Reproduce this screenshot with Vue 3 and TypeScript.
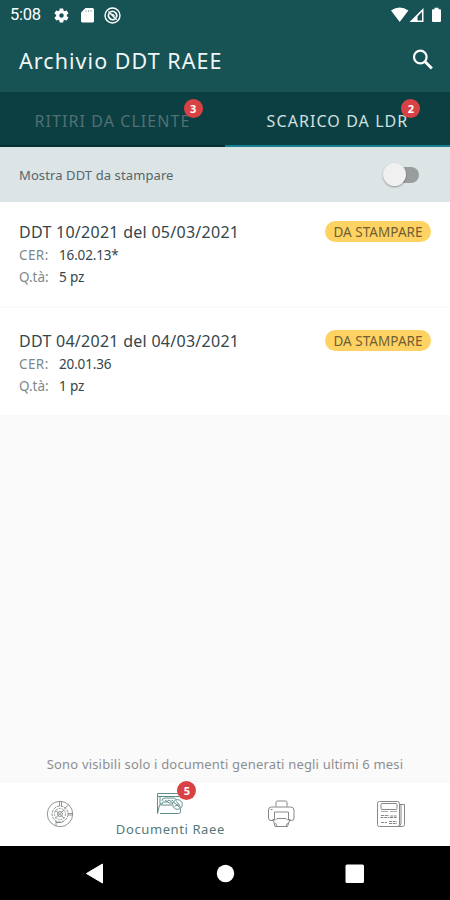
<script setup lang="ts">
import { ref } from 'vue'

interface Ddt {
  id: number
  title: string
  cer: string
  qty: string
}

const documents: Ddt[] = [
  { id: 1, title: 'DDT 10/2021 del 05/03/2021', cer: '16.02.13*', qty: '5 pz' },
  { id: 2, title: 'DDT 04/2021 del 04/03/2021', cer: '20.01.36', qty: '1 pz' },
]
const tabs = [
  { label: 'RITIRI DA CLIENTE', count: 3 },
  { label: 'SCARICO DA LDR', count: 2 },
]
const activeTab = ref(1)
const onlyToPrint = ref(false)
</script>

<template>
  <div class="screen">
    <div class="status">
      <span class="clock">5:08</span>
      <svg class="s-gear" width="17" height="17" viewBox="0 0 24 24"><path fill="#fff" fill-rule="evenodd" d="M19.4 13c0-.3.1-.6.1-1s0-.7-.1-1l2.1-1.600c.2-.2.2-.4.1-.6l-2-3.500c-.1-.2-.4-.3-.6-.2l-2.500 1c-.5-.4-1.100-.7-1.700-1l-.4-2.600c0-.3-.2-.5-.5-.5h-4c-.3 0-.5.2-.5.5L9 5.100c-.6.3-1.200.6-1.700 1l-2.500-1c-.2-.1-.5 0-.6.2l-2 3.500c-.1.2-.1.5.1.6L4.500 11c0 .3-.1.700-.1 1s0 .7.1 1l-2.200 1.600c-.2.2-.2.4-.1.600l2 3.500c.1.2.4.3.6.2l2.500-1c.5.4 1.100.7 1.700 1l.4 2.600c0 .3.3.5.500.5h4c.3 0 .5-.2.5-.5l.4-2.600c.6-.3 1.200-.6 1.700-1l2.500 1c.2.1.5 0 .6-.2l2-3.500c.1-.2.1-.5-.1-.6zM12 15.200a3.200 3.200 0 1 1 0-6.400 3.200 3.200 0 0 1 0 6.400z" /></svg>
      <svg class="s-sd" width="13" height="15" viewBox="0 0 13 15"><path fill="#fff" d="M4.500 0H11.500Q13 0 13 1.500V13Q13 14.500 11.500 14.500H1.500Q0 14.500 0 13V4.500z" /><path stroke="#9bb3b5" stroke-width="1" d="M5 2v2M7.500 2v2M10 2v2" /></svg>
      <svg class="s-dnd" width="17" height="17" viewBox="0 0 17 17" fill="none" stroke="#fff"><circle cx="8.500" cy="8.500" r="7.500" stroke-width="1.400" /><path stroke-width="1.600" d="M5 6.300A4.300 4.300 0 0 0 10.700 12.200M6.300 4.900A4.300 4.300 0 0 1 12.200 10.700M4.500 4.500l8.200 8.200" /><path stroke-width="1.500" d="M8 7l2.500 2" /></svg>
      <span class="grow"></span>
      <svg width="51" height="16" viewBox="0 0 51 16"><path fill="#fff" d="M0 3.500Q8.700-2.300 17.400 3.500L8.700 15z" /><path fill="#fff" fill-rule="evenodd" d="M32.500 1v14H18.500zM31 4.800L26.500 9.500V13.500H31z" /><path fill="#fff" d="M43.500 2.300V.8h4v1.500h1.500q1 0 1 1V14q0 1-1 1h-7q-1 0-1-1V3.300q0-1 1-1z" /></svg>
    </div>

    <header class="bar">
      <h1>Archivio DDT RAEE</h1>
      <svg width="22" height="22" viewBox="0 0 22 22" fill="none" stroke="#fff"><circle cx="8.300" cy="8" r="6.300" stroke-width="2.200" /><path stroke-width="2.800" d="M12.900 12.600l7 7" /></svg>
    </header>

    <nav class="tabs">
      <button v-for="(tab, i) in tabs" :key="tab.label" class="tab" :class="{ active: activeTab === i }" @click="activeTab = i">
        <span class="tab-label">{{ tab.label }}<b class="badge">{{ tab.count }}</b></span>
      </button>
    </nav>

    <div class="filter">
      <span class="filter-label">Mostra DDT da stampare</span>
      <button class="switch" :class="{ on: onlyToPrint }" role="switch" :aria-checked="onlyToPrint" @click="onlyToPrint = !onlyToPrint"><i></i></button>
    </div>

    <main class="list">
      <article v-for="doc in documents" :key="doc.id" class="item">
        <div class="info">
          <h2>{{ doc.title }}</h2>
          <p><span class="key cer">CER:</span><span class="val">{{ doc.cer }}</span></p>
          <p><span class="key">Q.tà:</span><span class="val">{{ doc.qty }}</span></p>
        </div>
        <span class="chip">DA STAMPARE</span>
      </article>
    </main>

    <p class="note">Sono visibili solo i documenti generati negli ultimi 6 mesi</p>

    <nav class="bottom">
      <a class="dest">
        <svg width="28" height="28" viewBox="0 0 28 28" fill="none" stroke="#85898a" stroke-width=".9"><circle cx="14" cy="14" r="12.700" /><circle cx="14" cy="14" r="8" stroke-dasharray="3 .8" /><circle cx="14" cy="14" r="5.500" stroke-dasharray="2 1" /><circle cx="14" cy="14" r="2.500" /><path d="M13.500 1.300V6M15.500 1.300V6M18.500 8.500l4-3.500M22 13.500h4.700M22 15h4.700M10 21v5M10 22.500h5.500l2-1.500M9 10l9.500 8.500M18.500 9.500L9 18.500" /></svg>
      </a>
      <a class="dest current">
        <span class="icon-wrap">
          <svg width="28" height="23" viewBox="0 0 28 23" fill="none" stroke="#4d8280" stroke-width=".9"><path d="M1.500 21.500V1.500H25v3M1.500 4.500H23M4 4.500v7.500M1.500 21.500l2-8.500H16M4 21.500h18.500q2 0 2-2V17M6 9q0-3 2.500-3h10l2 2M4 12h2l1-2h5l1 1h4M9 8l2 1.500L13 8l2 1.500L17 8" /><circle cx="21.500" cy="12.500" r="4.800" /><path d="M17.500 10l7 6M20 9.500l3.500 3M18.500 14.500l3-2 3 2" /></svg>
          <b class="badge">5</b>
        </span>
        <span class="dest-label">Documenti Raee</span>
      </a>
      <a class="dest">
        <svg width="28" height="28" viewBox="0 0 28 28" fill="none" stroke="#85898a" stroke-width="1"><path d="M9 6.500V2.500q0-1.500 1.500-1.500h8q1.500 0 1.500 1.500v4M6.500 20.500H4q-2.500 0-2.500-2.500v-8q0-3 3-3h19q3.500 0 3.500 3v8q0 2.500-2.500 2.500H22M7.500 19v-7h14v7M8 20.500l2-2h9l2 2M5.500 19.500h2.500M21 19.500h2.500M6.500 20.500l1.500 6h12.500l2-6M3.500 9.500h2M8.500 23l1.500 3M20.500 23L19 26" /></svg>
      </a>
      <a class="dest">
        <svg width="30" height="28" viewBox="0 0 30 28" fill="none" stroke="#85898a" stroke-width="1"><rect x="1.500" y="1.500" width="22" height="25" rx="2" /><path d="M23.500 4.500H28.500V24.500Q28.500 26.500 26 26.500H21.500M25 4.500v18.500q0 3-2.500 3.500" /><rect x="5" y="3.500" width="16" height="6" rx="1" /><path d="M5 11.500h7M14 11.500h7" stroke-width=".7" /><path stroke-dasharray="3 .7" d="M5 15.500h8M14 16h7M4.500 17.500h9M14 17.500h7M5 22.500h6M13 21.500h8M13 23.500h8" /></svg>
      </a>
    </nav>

    <div class="system">
      <svg width="450" height="54" viewBox="0 0 450 54" fill="#fff"><path d="M86.500 27.500L102.500 18V37z" stroke="#fff" stroke-linejoin="round" /><circle cx="225.500" cy="27.500" r="8.700" /><rect x="345.500" y="18.500" width="18.500" height="18.500" rx="1.500" /></svg>
    </div>
  </div>
</template>

<style>
body {
  margin: 0;
}
</style>

<style scoped>
.screen {
  display: flex;
  flex-direction: column;
  width: 450px;
  height: 900px;
  overflow: hidden;
  background: #fafafa;
  font-family: 'Noto Sans', 'Open Sans', sans-serif;
  color: #35464b;
}
h1,
h2,
p {
  margin: 0;
  font-weight: 400;
  white-space: nowrap;
}
button {
  padding: 0;
  border: 0;
  background: none;
  font: inherit;
}
svg {
  display: block;
  flex: none;
}
.status {
  display: flex;
  align-items: center;
  height: 30px;
  padding: 0 8px 0 10px;
  background: #175255;
}
.clock {
  width: 43px;
  font: 400 16.500px/30px Roboto, sans-serif;
  letter-spacing: -0.3px;
  color: #fff;
}
.s-sd {
  margin-left: 11px;
}
.s-dnd {
  margin-left: 10px;
}
.grow {
  flex: 1;
}
.bar {
  display: flex;
  align-items: center;
  justify-content: space-between;
  height: 62px;
  padding: 0 16px 0 19px;
  background: #175255;
}
.bar h1 {
  font-size: 21.500px;
  line-height: 62px;
  letter-spacing: 1.050px;
  color: #eef6f7;
}
.bar svg {
  margin-bottom: 3px;
}
.tabs {
  display: flex;
  height: 55px;
  background: #0c3f42;
}
.tab {
  flex: 1;
  box-sizing: border-box;
  border-bottom: 2px solid #082f32;
  font-size: 16px;
  line-height: 53px;
  color: #526f73;
}
.tab.active {
  border-color: #168092;
  color: #d3e0e1;
}
.tab-label {
  position: relative;
  display: inline-block;
  letter-spacing: 1.080px;
  padding-top: 3px;
}
.badge {
  position: absolute;
  top: 7px;
  right: -12px;
  width: 19px;
  height: 19px;
  border-radius: 50%;
  background: #d94244;
  color: #fff;
  font-size: 11px;
  line-height: 19px;
  font-weight: 700;
  letter-spacing: 0;
  text-align: center;
}
.filter {
  display: flex;
  align-items: center;
  justify-content: space-between;
  box-sizing: border-box;
  height: 55px;
  padding: 0 31px 0 19px;
  background: #dce4e6;
}
.filter-label {
  font-size: 13px;
  letter-spacing: 0.1px;
  color: #56666a;
}
.switch {
  position: relative;
  width: 34px;
  height: 16px;
  border-radius: 8px;
  background: #999d9e;
}
.switch i {
  position: absolute;
  top: -4px;
  left: -2px;
  width: 23px;
  height: 23px;
  border-radius: 50%;
  background: #f0f0f0;
  box-shadow: 0 1px 2px rgba(0, 0, 0, 0.35);
}
.switch.on i {
  left: 14px;
}
.item {
  display: flex;
  align-items: flex-start;
  justify-content: space-between;
  box-sizing: border-box;
  height: 104px;
  padding: 19px 19px 0;
  background: #fff;
}
.item + .item {
  height: 109px;
  padding-top: 22px;
  border-top: 2px solid #fafafa;
}
.item h2 {
  font-size: 16px;
  line-height: 23px;
  letter-spacing: 0.270px;
}
.item p {
  display: flex;
  font-size: 13.500px;
  line-height: 22px;
}
.key {
  width: 40px;
  color: #7c898c;
}
.cer {
  letter-spacing: 0.400px;
}
.val {
  letter-spacing: -0.150px;
}
.chip {
  width: 106px;
  height: 21px;
  border-radius: 10.500px;
  background: #ffd363;
  color: #715e32;
  font-size: 13.500px;
  line-height: 22px;
  letter-spacing: 0.050px;
  text-align: center;
  white-space: nowrap;
}
.note {
  margin: auto auto 5px;
  font-size: 13px;
  line-height: 24px;
  letter-spacing: 0.180px;
  color: #8b8f91;
}
.bottom {
  display: flex;
  height: 65px;
  padding: 0 4px 0 5px;
  background: #fff;
  border-top: 1px solid #f5f5f5;
  box-sizing: border-box;
}
.dest {
  display: flex;
  flex: 1;
  flex-direction: column;
  align-items: center;
  justify-content: center;
  padding-bottom: 1px;
}
.current {
  justify-content: flex-start;
  padding-top: 10px;
}
.icon-wrap {
  position: relative;
}
.icon-wrap .badge {
  top: -11px;
  right: -12px;
}
.dest-label {
  padding-top: 2px;
  font-size: 13px;
  line-height: 24px;
  letter-spacing: 0.600px;
  color: #55797a;
  white-space: nowrap;
}
.system {
  height: 54px;
  background: #000;
}
</style>
